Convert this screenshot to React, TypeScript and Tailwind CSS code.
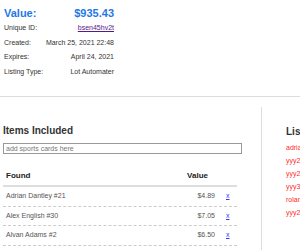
import React from "react";

const DETAILS = [
  { label: "Unique ID:", value: "bsen45hv2t", link: true },
  { label: "Created:", value: "March 25, 2021 22:48" },
  { label: "Expires:", value: "April 24, 2021" },
  { label: "Listing Type:", value: "Lot Automater" },
];

const ITEMS = [
  { name: "Adrian Dantley #21", value: "$4.89" },
  { name: "Alex English #30", value: "$7.05" },
  { name: "Alvan Adams #2", value: "$6.50" },
];

const LISTINGS = [
  "adriandantley21",
  "yyy2345",
  "yyy2222",
  "yyy3333",
  "roland123",
  "yyy2111",
];

export default function App() {
  return (
    <div className="w-[300px] h-[250px] overflow-hidden bg-white font-['Liberation_Sans',Arial,sans-serif] text-[#333]">
      {/* Summary */}
      <div className="w-[114px] pl-[4px] pt-[5px]">
        <div className="flex justify-between items-center h-[16px] text-[11px] font-bold text-[#1e78e6]">
          <span>Value:</span>
          <span>$935.43</span>
        </div>
        {DETAILS.map((d) => (
          <div
            key={d.label}
            className="flex justify-between items-center h-[14.5px] text-[7px] whitespace-nowrap"
          >
            <span>{d.label}</span>
            {d.link ? (
              <a href="#" className="text-[#551a8b] underline">
                {d.value}
              </a>
            ) : (
              <span>{d.value}</span>
            )}
          </div>
        ))}
      </div>

      <div className="mt-[17px] border-t border-[#ddd]" />

      <div className="flex mt-[10px]">
        {/* Items */}
        <div className="w-[262px] shrink-0 border-r border-[#ddd] pl-[3px] pt-[18px] h-[150px]">
          <h3 className="text-[10px] leading-[12px] font-bold">Items Included</h3>
          <input
            type="text"
            placeholder="add sports cards here"
            className="mt-[6px] block w-[239px] h-[11px] border border-[#999] px-[2px] text-[7px] placeholder:text-[#777] outline-none"
          />
          <div className="mt-[12px] w-[234px] text-[7px]">
            <div className="flex items-center h-[21px] border-b-2 border-[#ddd] font-bold text-[8px] text-[#222]">
              <span className="flex-1 pl-[3px]">Found</span>
              <span className="w-[40px] text-right pr-[7px]">Value</span>
              <span className="w-[22px]" />
            </div>
            {ITEMS.map((it) => (
              <div
                key={it.name}
                className="flex items-center h-[19.5px] border-b border-dashed border-[#ccc] text-[#555]"
              >
                <span className="flex-1 pl-[3px]">{it.name}</span>
                <span className="w-[40px] text-right">{it.value}</span>
                <span className="w-[22px] pl-[11px]">
                  <a href="#" className="text-[#3333ff] underline">
                    x
                  </a>
                </span>
              </div>
            ))}
          </div>
        </div>

        {/* Listings */}
        <div className="pl-[24px] pt-[19px] whitespace-nowrap">
          <h3 className="text-[10px] leading-[12px] font-bold">Listings</h3>
          <ul className="mt-[3px] text-[7px] leading-[13px] text-[#ff2a2a]">
            {LISTINGS.map((l) => (
              <li key={l}>{l}</li>
            ))}
          </ul>
        </div>
      </div>
    </div>
  );
}
